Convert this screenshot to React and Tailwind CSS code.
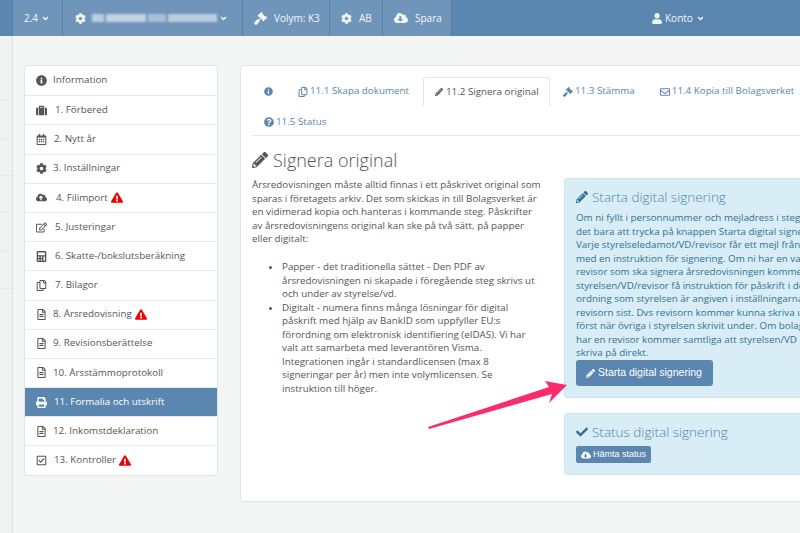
import React from 'react';
import {
  FaInfoCircle, FaSuitcase, FaRegCalendarAlt, FaCog, FaCloudUploadAlt, FaExclamationTriangle,
  FaRegEdit, FaCalculator, FaRegCopy, FaRegFileAlt, FaPrint, FaRegCheckSquare, FaPencilAlt,
  FaGavel, FaRegEnvelope, FaQuestionCircle, FaCheck, FaCloudDownloadAlt, FaUser, FaAngleDown,
} from 'react-icons/fa';

const menu = [
  { icon: FaInfoCircle, label: 'Information', gap: 'gap-[6px]' },
  { icon: FaSuitcase, label: '1. Förbered', gap: 'gap-[8px]' },
  { icon: FaRegCalendarAlt, label: '2. Nytt år', gap: 'gap-[7px]' },
  { icon: FaCog, label: '3. Inställningar', gap: 'gap-[6px]' },
  { icon: FaCloudUploadAlt, label: '4. Filimport', warn: true, gap: 'gap-[9px]' },
  { icon: FaRegEdit, label: '5. Justeringar', gap: 'gap-[8px]' },
  { icon: FaCalculator, label: '6. Skatte-/bokslutsberäkning', gap: 'gap-[8px]' },
  { icon: FaRegCopy, label: '7. Bilagor', gap: 'gap-[8px]' },
  { icon: FaRegFileAlt, label: '8. Årsredovisning', warn: true, gap: 'gap-[6px]' },
  { icon: FaRegFileAlt, label: '9. Revisionsberättelse', gap: 'gap-[6px]' },
  { icon: FaRegFileAlt, label: '10. Årsstämmoprotokoll', gap: 'gap-[6px]' },
  { icon: FaPrint, label: '11. Formalia och utskrift', active: true, gap: 'gap-[7px]' },
  { icon: FaRegFileAlt, label: '12. Inkomstdeklaration', gap: 'gap-[6px]' },
  { icon: FaRegCheckSquare, label: '13. Kontroller', warn: true, gap: 'gap-[7px]' },
];

const infoLines = [
  'Om ni fyllt i personnummer och mejladress i steg',
  'det bara att trycka på knappen Starta digital signe',
  'Varje styrelseledamot/VD/revisor får ett mejl från',
  'med en instruktion för signering. Om ni har en va',
  'revisor som ska signera årsredovisningen komme',
  'styrelsen/VD/revisor få instruktion för påskrift i de',
  'ordning som styrelsen är angiven i inställningarna',
  'revisorn sist. Dvs revisorn kommer kunna skriva u',
  'först när övriga i styrelsen skrivit under. Om bolag',
  'har en revisor kommer samtliga att styrelsen/VD k',
  'skriva på direkt.',
];

const NavItem = ({ className, children }) => (
  <div className={`flex items-center h-full border-r border-[#55809f] bg-[#7095bb] text-[#f3f6f9] text-[10px] ${className}`}>
    {children}
  </div>
);

const Tab = ({ icon: Icon, children, className = '' }) => (
  <div className={`flex items-center gap-[2px] text-[#5b86b0] text-[9.8px] ${className}`}>
    <Icon className="w-[10px] h-[10px]" />
    {children}
  </div>
);

export default function App() {
  return (
    <div className="relative w-[800px] h-[533px] overflow-hidden bg-[#f4f6f6] text-[#555] font-['Open_Sans',sans-serif]">

      {/* Top bar */}
      <div className="flex h-[36px] bg-[#5b86b0]">
        <div className="w-[13px] border-r border-[#55809f]" />
        <NavItem className="w-[50px] pl-[11px] gap-[3px]">
          2.4 <FaAngleDown className="w-[9px] h-[9px]" />
        </NavItem>
        <NavItem className="w-[180px] pl-[12px]">
          <FaCog className="w-[11px] h-[11px] mr-[6px]" />
          <div className="flex gap-[2px] w-[125px] h-[8px] blur-[1px]">
            <div className="w-[12px] bg-[#bccde0]" />
            <div className="w-[40px] bg-[#c5d4e4]" />
            <div className="w-[18px] bg-[#a9bfd6]" />
            <div className="w-[49px] bg-[#bccde0]" />
          </div>
          <FaAngleDown className="w-[9px] h-[9px] ml-[2px]" />
        </NavItem>
        <NavItem className="w-[87px] pl-[11px] gap-[7px]">
          <FaGavel className="w-[13px] h-[13px]" /> Volym: K3
        </NavItem>
        <NavItem className="w-[53px] pl-[11px] gap-[7px]">
          <FaCog className="w-[11px] h-[11px]" /> AB
        </NavItem>
        <NavItem className="w-[69px] pl-[11px] gap-[7px]">
          <FaCloudDownloadAlt className="w-[14px] h-[14px]" /> Spara
        </NavItem>
        <div className="ml-[200px] flex items-center text-[#f3f6f9] text-[10px]">
          <FaUser className="w-[10px] h-[11px] mr-[3px]" /> Konto
          <FaAngleDown className="w-[9px] h-[9px] ml-[3px]" />
        </div>
      </div>

      <div className="flex h-[497px]">
        {/* Left strip */}
        <div className="w-[13px] shrink-0 bg-[#f1f3f3] border-r border-[#dcdfdf] flex flex-col">
          <div className="h-[65px] border-b border-[#e6e8e8]" />
          <div className="h-[38px] border-b border-[#e6e8e8]" />
          <div className="h-[37px] border-b border-[#e6e8e8]" />
          <div className="h-[37px] border-b border-[#e6e8e8]" />
          <div className="h-[38px] border-b border-[#e6e8e8]" />
          <div className="h-[38px] border-b border-[#e6e8e8]" />
        </div>

        {/* Sidebar menu */}
        <div className="w-[194px] shrink-0 ml-[11px] mt-[29px] self-start bg-white border border-[#e3e5e5] rounded-[3px] overflow-hidden">
          {menu.map((item, i) => {
            const Icon = item.icon;
            return (
              <div
                key={item.label}
                className={`flex items-center h-[29.2px] pl-[11px] text-[9.8px] ${item.gap} ${i > 0 ? 'border-t border-[#e9ebeb]' : ''} ${item.active ? 'bg-[#5b86b0] text-white' : 'text-[#555]'}`}
              >
                <Icon className="w-[11px] h-[11px] shrink-0" />
                <span className="flex items-center gap-[3px]">
                  {item.label}
                  {item.warn && <FaExclamationTriangle className="w-[12px] h-[11px] text-[#f00000]" />}
                </span>
              </div>
            );
          })}
        </div>

        {/* Main panel */}
        <div className="w-[600px] h-[437px] shrink-0 ml-[22px] mt-[29px] bg-white border border-[#e3e5e5] rounded-[3px] px-[11px]">
          <div className="h-[70px] border-b border-[#e6e8e8] w-[580px] pt-[11px]">
            <div className="flex items-center h-[29px]">
              <FaInfoCircle className="w-[9px] h-[9px] ml-[12px] text-[#5b86b0]" />
              <Tab icon={FaRegCopy} className="ml-[25px]">11.1 Skapa dokument</Tab>
              <div className="ml-[14px] w-[127px] h-[29px] flex items-center gap-[3px] pl-[11px] bg-white border border-b-0 border-[#e3e5e5] rounded-t-[3px] text-[9.8px]">
                <FaPencilAlt className="w-[8px] h-[8px]" /> 11.2 Signera original
              </div>
              <Tab icon={FaGavel} className="ml-[13px]">11.3 Stämma</Tab>
              <Tab icon={FaRegEnvelope} className="ml-[25px]">11.4 Kopia till Bolagsverket</Tab>
            </div>
            <Tab icon={FaQuestionCircle} className="ml-[12px] mt-[9px]">11.5 Status</Tab>
          </div>

          <div className="flex gap-[23px]">
            {/* Left column */}
            <div className="w-[289px] shrink-0 text-[9.8px] leading-[13.5px]">
              <h1 className="flex items-center gap-[5px] mt-[12px] text-[18px] leading-[24px] font-light text-[#555]">
                <FaPencilAlt className="w-[16px] h-[16px]" /> Signera original
              </h1>
              <p className="mt-[6px]">
                Årsredovisningen måste alltid finnas i ett påskrivet original som sparas i företagets arkiv. Det som skickas in till Bolagsverket är en vidimerad kopia och hanteras i kommande steg. Påskrifter av årsredovisningens original kan ske på två sätt, på papper eller digitalt:
              </p>
              <ul className="list-disc pl-[30px] mt-[14.5px]">
                <li>Papper - det traditionella sättet - Den PDF av årsredovisningen ni skapade i föregående steg skrivs ut och under av styrelse/vd.</li>
                <li>Digitalt - numera finns många lösningar för digital påskrift med hjälp av BankID som uppfyller EU:s förordning om elektronisk identifiering (eIDAS). Vi har valt att samarbeta med leverantören Visma. Integrationen ingår i standardlicensen (max 8 signeringar per år) men inte volymlicensen. Se instruktion till höger.</li>
              </ul>
            </div>

            {/* Right column */}
            <div className="w-[260px] shrink-0 mt-[42px] text-[#31708f] text-[9.8px] leading-[13.55px]">
              <div className="h-[220px] bg-[#d9edf7] border border-[#c9e6f2] rounded-[3px] pl-[11px] pt-[9px] overflow-hidden">
                <h2 className="flex items-center gap-[4px] text-[13.5px] leading-[18px] font-light text-[#4b87a8] whitespace-nowrap">
                  <FaPencilAlt className="w-[12px] h-[12px] text-[#31708f]" /> Starta digital signering
                </h2>
                <div className="mt-[5px] whitespace-nowrap">
                  {infoLines.map((line) => <div key={line}>{line}</div>)}
                </div>
                <button className="flex items-center gap-[3px] w-[137px] h-[26px] pl-[10px] bg-[#5b86b0] rounded-[3px] text-white text-[10.5px] font-['Liberation_Sans',sans-serif]">
                  <FaPencilAlt className="w-[9px] h-[9px]" /> Starta digital signering
                </button>
              </div>
              <div className="h-[62px] mt-[15px] bg-[#d9edf7] border border-[#c9e6f2] rounded-[3px] pl-[11px] pt-[9px]">
                <h2 className="flex items-center gap-[4px] text-[13.5px] leading-[18px] font-light text-[#4b87a8]">
                  <FaCheck className="w-[12px] h-[12px] text-[#31708f]" /> Status digital signering
                </h2>
                <button className="flex items-center gap-[2px] h-[17px] mt-[5px] px-[5px] bg-[#5b86b0] rounded-[2px] text-white text-[9px] font-['Liberation_Sans',sans-serif]">
                  <FaCloudDownloadAlt className="w-[10px] h-[10px]" /> Hämta status
                </button>
              </div>
            </div>
          </div>
        </div>
      </div>

      {/* Annotation arrow */}
      <svg className="absolute left-0 top-0 pointer-events-none" width="800" height="533">
        <polygon points="428,427 429,429 552,394 549,403 567,385 545,381 549,387" fill="#fb2c6c" />
      </svg>
    </div>
  );
}
